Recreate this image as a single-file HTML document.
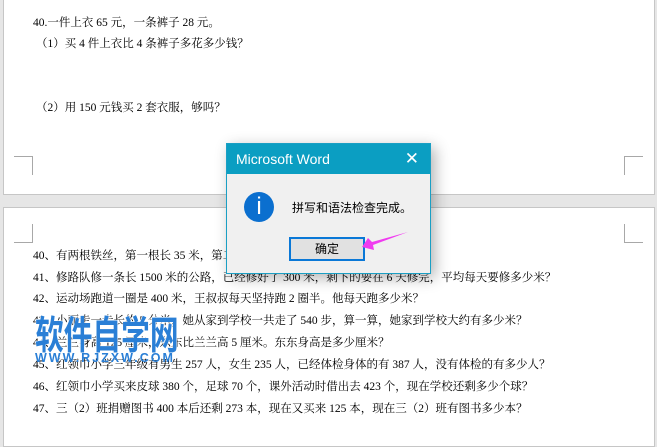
<!DOCTYPE html>
<html><head><meta charset="utf-8"><style>
*{margin:0;padding:0;box-sizing:border-box}
body{width:657px;height:438px;background:#e6e6e6;position:relative;overflow:hidden;font-family:"Liberation Serif","Noto Serif CJK SC","Noto Sans CJK SC",serif;color:#000}
.page{position:absolute;background:#fff;border:1px solid #c6c6c6}
.t{position:absolute;font-size:11.5px;white-space:nowrap;line-height:14px}
.c{position:absolute;border-color:#a8a8a8;border-style:solid;width:19px;height:19px}
#dlg{position:absolute;left:226px;top:143px;width:205px;height:131px;background:#f0f0f0;border:1px solid #1a9fc4;box-shadow:4px 4px 14px rgba(0,0,0,.3);font-family:"Liberation Sans","Noto Sans CJK SC",sans-serif}
#title{height:30px;background:#0b9ec2;color:#fff;font-size:14px;line-height:30px;padding-left:9px}
#wm{position:absolute;left:35px;top:309px;font-family:"Noto Sans CJK SC",sans-serif;font-weight:bold;font-size:33px;color:#2a7fd6;line-height:40px;white-space:nowrap;transform-origin:0 0;transform:scale(0.87,1.18);-webkit-text-stroke:1px #fff;paint-order:stroke}
#url{position:absolute;left:35px;top:352px;font-family:"Liberation Sans",sans-serif;font-weight:bold;font-size:12.5px;color:#2a7fd6;letter-spacing:2px;line-height:12px;white-space:nowrap}
</style></head><body>
<div class="page" style="left:3px;top:-2px;width:652px;height:197px"></div>
<div class="c" style="left:14px;top:156px;border-width:0 1px 0 0"></div>
<div class="c" style="left:14px;top:156px;border-width:1px 0 0 0;width:19px;height:1px"></div>
<div class="c" style="left:624px;top:156px;border-width:1px 0 0 1px"></div>
<div class="page" style="left:3px;top:207px;width:652px;height:240px"></div>
<div class="c" style="left:14px;top:224px;border-width:0 1px 1px 0"></div>
<div class="c" style="left:624px;top:224px;border-width:0 0 1px 1px"></div>

<div class="t" style="left:33px;top:16px">40.一件上衣 65 元，一条裤子 28 元。</div>
<div class="t" style="left:36px;top:37px">（1）买 4 件上衣比 4 条裤子多花多少钱？</div>
<div class="t" style="left:36px;top:101px">（2）用 150 元钱买 2 套衣服，够吗？</div>

<div class="t" style="left:33px;top:249px">40、有两根铁丝，第一根长 35 米，第二根比第一根长 8 米，第二根长多少米？</div>
<div class="t" style="left:33px;top:271px">41、修路队修一条长 1500 米的公路，已经修好了 300 米，剩下的要在 6 天修完，平均每天要修多少米？</div>
<div class="t" style="left:33px;top:292px">42、运动场跑道一圈是 400 米，王叔叔每天坚持跑 2 圈半。他每天跑多少米？</div>
<div class="t" style="left:33px;top:314px">43、小丽走一步长约 5 分米，她从家到学校一共走了 540 步，算一算，她家到学校大约有多少米？</div>
<div class="t" style="left:33px;top:336px">44、兰兰身高 125 厘米，东东比兰兰高 5 厘米。东东身高是多少厘米？</div>
<div class="t" style="left:33px;top:358px">45、红领巾小学三年级有男生 257 人，女生 235 人，已经体检身体的有 387 人，没有体检的有多少人？</div>
<div class="t" style="left:33px;top:380px">46、红领巾小学买来皮球 380 个，足球 70 个，课外活动时借出去 423 个，现在学校还剩多少个球？</div>
<div class="t" style="left:33px;top:402px">47、三（2）班捐赠图书 400 本后还剩 273 本，现在又买来 125 本，现在三（2）班有图书多少本？</div>

<div id="wm">软件自学网</div>
<div id="url">WWW.RJZXW.COM</div>

<div id="dlg">
<div id="title">Microsoft Word<span style="position:absolute;right:11px;top:0;font-size:17px">✕</span></div>
<div style="position:absolute;left:17px;top:48px;width:30px;height:30px;border-radius:50%;background:#0b6fcf;color:#fff;text-align:center;font:24px/30px 'Liberation Sans',sans-serif">i</div>
<div style="position:absolute;left:65px;top:55px;font-size:12px">拼写和语法检查完成。</div>
<div style="position:absolute;left:62px;top:93px;width:76px;height:24px;background:#e1e1e1;border:2px solid #0a78d7;font-size:12px;text-align:center;line-height:20px">确定</div>
</div>
<svg style="position:absolute;left:360px;top:230px" width="60" height="25"><path d="M48 2 L12 12 L8 8 L2 17 L14 20 L13 15 Z" fill="#f03bf0"/></svg>
</body></html>
